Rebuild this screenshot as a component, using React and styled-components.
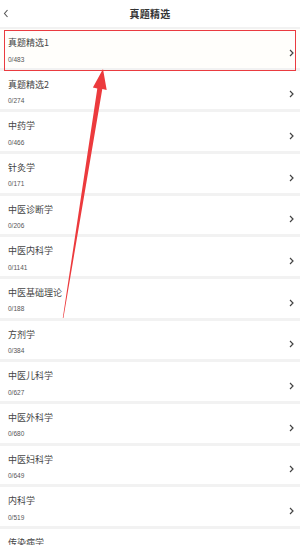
import React from "react";
import styled, { createGlobalStyle } from "styled-components";

const Global = createGlobalStyle`
  html, body { margin: 0; padding: 0; background: #f2f2f2; }
  body { font-family: "Noto Sans CJK SC", "Noto Sans", sans-serif; }
  #root { width: 300px; height: 545px; overflow: hidden; }
`;

const Page = styled.div`
  position: relative;
  width: 300px;
  height: 545px;
  overflow: hidden;
  background: #f2f2f2;
`;

const Header = styled.header`
  height: 27px;
  background: #fff;
  display: flex;
  align-items: center;
  justify-content: center;
  position: relative;
`;

const Back = styled.span`
  position: absolute;
  left: 3px;
  top: 9px;
  display: flex;
`;

const Title = styled.h1`
  margin: 0;
  font-size: 10px;
  font-weight: 700;
  color: #333;
  letter-spacing: 0.3px;
`;

const List = styled.div`
  display: flex;
  flex-direction: column;
  gap: 3px;
  padding-top: 2px;
`;

const Card = styled.div`
  height: 38.67px;
  flex: none;
  background: ${(p) => (p.$active ? "#fffefb" : "#fff")};
  display: flex;
  align-items: center;
  padding: 0 6px 0 8px;
  box-sizing: border-box;
`;

const Texts = styled.div`
  flex: 1;
  display: flex;
  flex-direction: column;
  align-self: flex-start;
  padding-top: 8px;
`;

const Name = styled.div`
  font-size: 9px;
  line-height: 12px;
  color: #444;
`;

const Count = styled.div`
  font-size: 6.5px;
  line-height: 8px;
  color: #555;
  margin-top: 6.5px;
  font-family: "Liberation Sans", "Noto Sans", sans-serif;
`;

const Chevron = styled.span`
  display: flex;
  margin-top: 9px;
`;

const Highlight = styled.div`
  position: absolute;
  left: 4px;
  top: 29.5px;
  width: 292px;
  height: 41.5px;
  box-sizing: border-box;
  border: 1.6px solid #ea3b40;
  pointer-events: none;
`;

const ArrowLayer = styled.svg`
  position: absolute;
  left: 0;
  top: 0;
  pointer-events: none;
`;

const items = [
  ["真题精选1", "0/483"],
  ["真题精选2", "0/274"],
  ["中药学", "0/466"],
  ["针灸学", "0/171"],
  ["中医诊断学", "0/206"],
  ["中医内科学", "0/1141"],
  ["中医基础理论", "0/188"],
  ["方剂学", "0/384"],
  ["中医儿科学", "0/627"],
  ["中医外科学", "0/680"],
  ["中医妇科学", "0/649"],
  ["内科学", "0/519"],
  ["传染病学", "0/210"],
];

const ChevronIcon = () => (
  <svg width="5" height="8" viewBox="0 0 5 8">
    <path d="M1 1 L4 4 L1 7" fill="none" stroke="#444" strokeWidth="1.2" />
  </svg>
);

export default function App() {
  return (
    <>
      <Global />
      <Page>
        <Header>
          <Back>
            <svg width="6" height="9" viewBox="0 0 6 9">
              <path d="M4.5 1 L1.5 4.5 L4.5 8" fill="none" stroke="#555" strokeWidth="1.1" />
            </svg>
          </Back>
          <Title>真题精选</Title>
        </Header>
        <List>
          {items.map(([n, c], i) => (
            <Card key={n} $active={i === 0}>
              <Texts>
                <Name>{n}</Name>
                <Count>{c}</Count>
              </Texts>
              <Chevron>
                <ChevronIcon />
              </Chevron>
            </Card>
          ))}
        </List>
        <Highlight />
        <ArrowLayer width="300" height="545" viewBox="0 0 300 545">
          <polygon
            points="103,69 106.7,89.9 102.3,89.1 63.4,318 62.8,318 97.3,88.4 92.9,87.6"
            fill="#ec3a3d"
          />
        </ArrowLayer>
      </Page>
    </>
  );
}
